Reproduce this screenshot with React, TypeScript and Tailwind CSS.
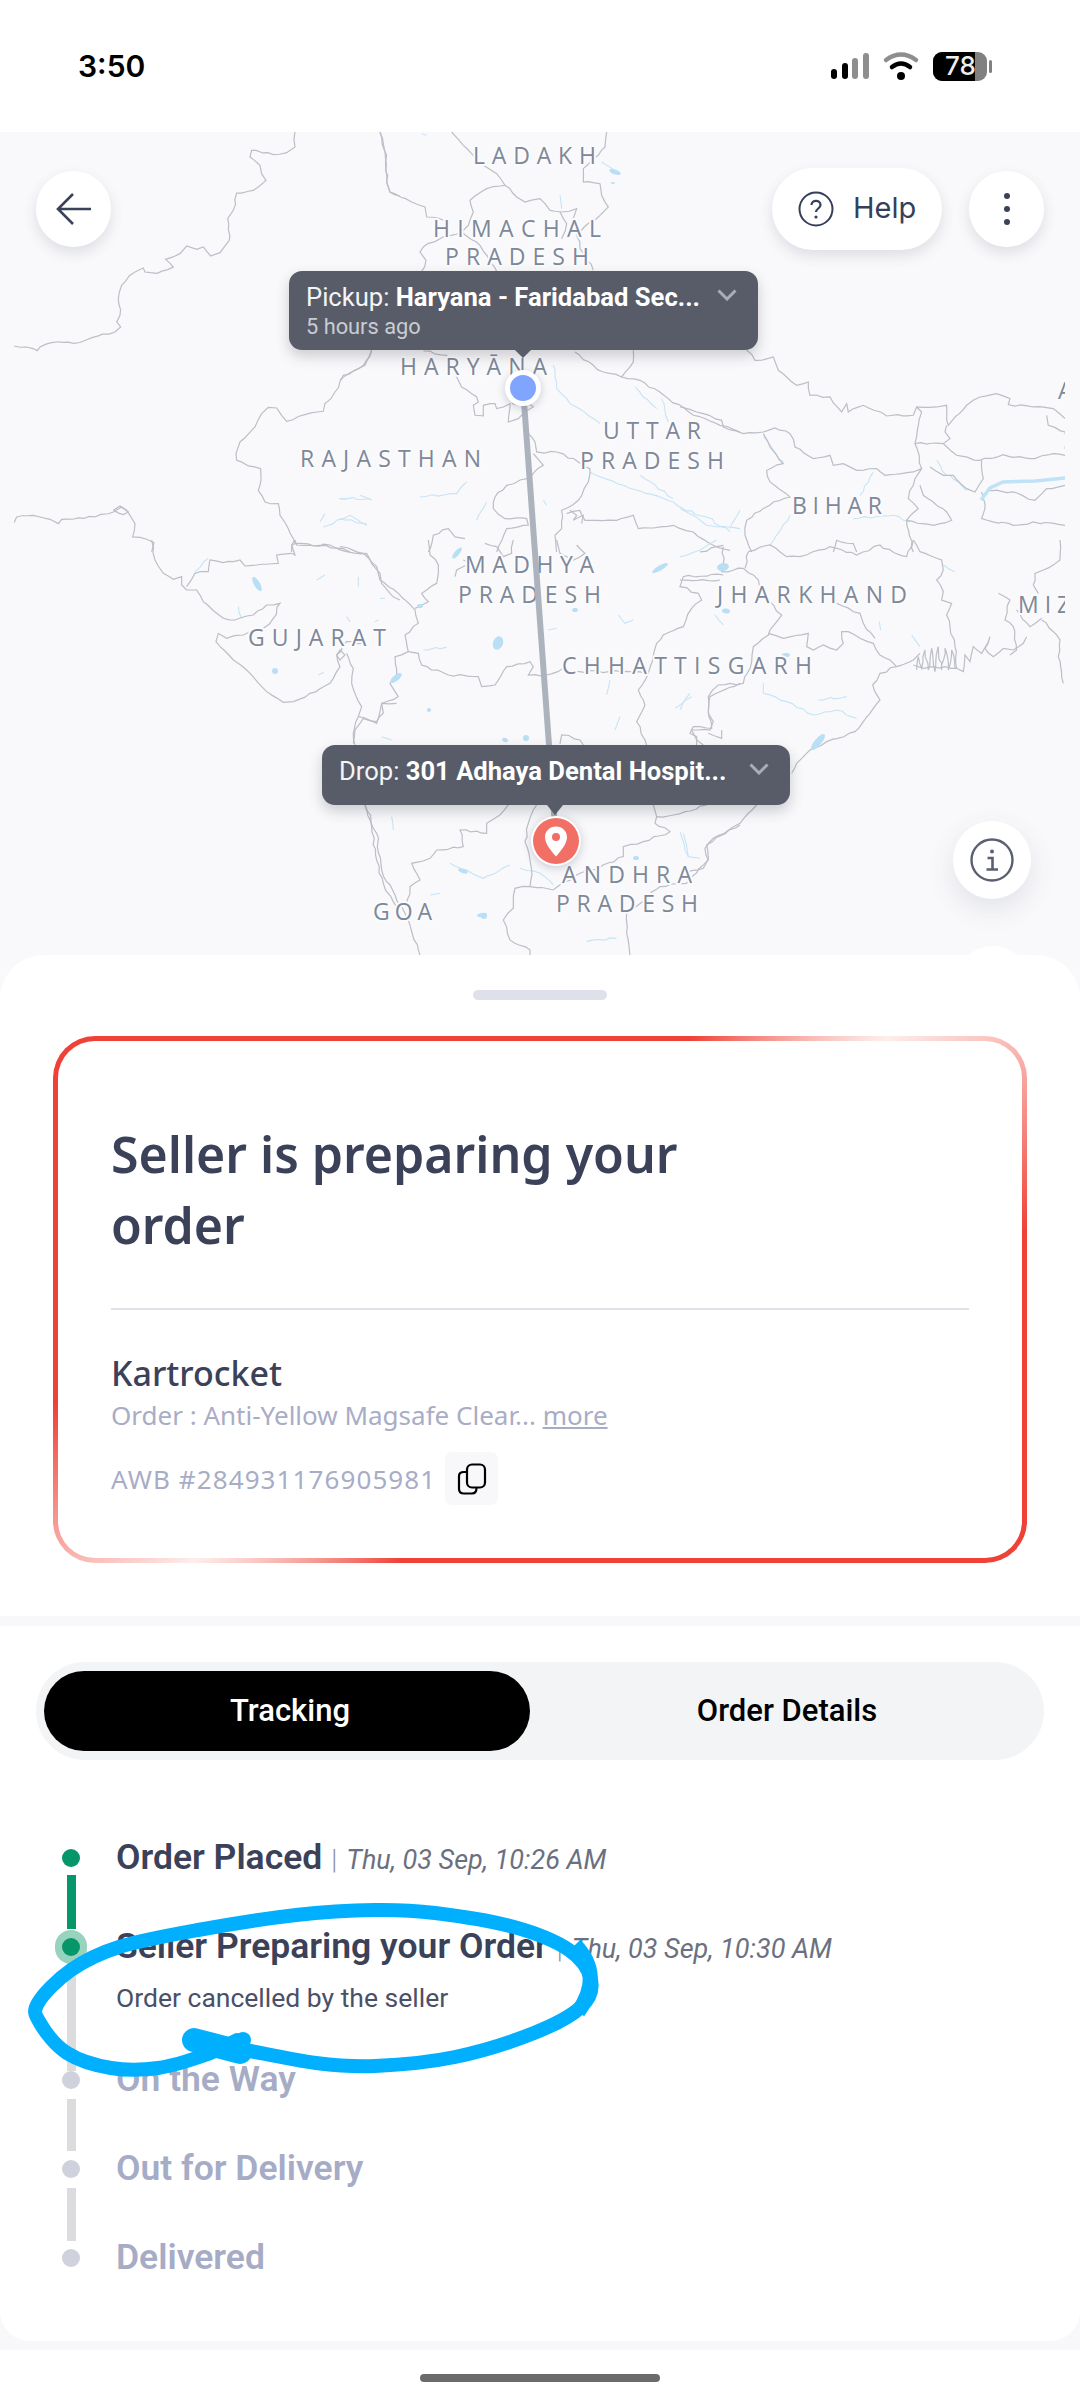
import React from "react";

type Tile = { x: number; y: number; b: string[]; r: string[] };

const tiles: Tile[] = [
  {
    x: 0,
    y: 132,
    b: [
      "885,0 885,45 860,62 820,68 755,55 750,75 780,100 785,125 798,145 760,175 710,183 700,235 683,260 688,325 660,362 632,372 610,345 590,352 560,342 540,365 497,382 520,405 472,424 435,420 430,408 405,420 365,460 355,500 360,550 350,570 362,585 345,600 222,634 155,632 120,645 112,656 80,645 42,642",
      "1115,655 1095,700 1030,730 1005,780 975,815 970,838 915,848 860,868 845,850 830,828 805,826 785,845 765,885 720,930 708,965 710,985 745,1002 782,1010 780,1060 775,1075 795,1110 835,1115 840,1150 865,1190 885,1235 875,1240 875,1260",
      "42,1172 50,1155 100,1150 120,1155 150,1162 175,1175 185,1162 235,1158 285,1155 340,1140 365,1125 390,1150 405,1175 398,1215 440,1222 462,1232 455,1260",
      "340,1135 360,1122 385,1140 370,1148 340,1135",
      "1140,0 1160,70 1160,150 1170,180 1200,192",
      "885,1235 960,1240 1030,1250 1050,1260",
    ],
    r: ["1018,1100 1055,1098", "960,1170 975,1145", "970,1185 1030,1160 1050,1150 1100,1180", "1080,1090 1115,1105"],
  },
  {
    x: 340,
    y: 132,
    b: [
      "120,0 135,60 140,150 150,180 215,210 255,225 260,255 310,265",
      "335,0 370,40 395,65 430,100 470,125 495,160 530,195 555,210 600,200 630,235 665,240 710,230 700,260 720,350 760,415",
      "800,0 795,45 775,70 730,110 730,150 780,155 785,190 805,225 780,250 750,270 720,300",
      "495,160 440,170 390,205 400,240 385,280 365,300 300,320 250,345 240,360 258,385 245,418",
      "365,300 420,340 450,390 470,418",
      "660,240 680,275 665,320",
      "95,655 70,700 0,745",
      "250,657 320,670 350,735 365,765 410,795 415,810 400,820 405,850 430,852 430,820 465,815 470,830 490,825 510,815 505,870 535,860 545,850 580,825 575,820 515,815",
      "705,660 760,700 790,720 845,735 880,690 880,655",
      "845,735 900,745 985,800 1060,850 1140,880 1200,900",
      "565,905 585,930 590,960 650,960 715,990 750,1010 745,1050 715,1105 665,1135 665,1190 645,1210 650,1260",
      "580,965 610,1000 560,1040 500,1060 465,1095 460,1130 495,1160 560,1160 565,1180 500,1190 470,1260",
      "265,1260 280,1210 325,1190 345,1215 375,1220",
      "680,1145 720,1135 735,1165 770,1165 830,1165 880,1150 895,1190 960,1185 1000,1180 1060,1200 1120,1240 1170,1255",
      "690,1135 710,1150 700,1165 730,1150 725,1175",
    ],
    r: [
      "640,700 650,770 690,815 780,875",
      "885,765 950,830",
      "965,800 985,870",
      "750,1020 850,1060 1000,1110 1100,1180 1200,1190",
      "900,1030 1000,1100",
      "0,1100 90,1100",
      "240,1095 350,1085 380,1050",
      "440,1110 410,1165",
      "0,1160 80,1175",
      "610,1105 620,1120",
      "660,190 665,230",
      "785,90 830,120",
      "245,5 260,10",
    ],
  },
  {
    x: 680,
    y: 132,
    b: [
      "200,655 225,685 280,675 295,715 350,760 385,750 390,790 450,795 485,840 500,815 505,840 550,820 620,852 700,850 710,825 770,825 800,820 805,880 860,820 900,795 950,785 990,800 985,818 1060,825 1120,830 1155,860",
      "710,825 725,840 715,880 705,935 790,935 830,970 900,985 970,968 1050,980 1120,965 1155,970",
      "800,880 795,900 810,920 790,935",
      "1100,850 1105,880 1155,900 1155,950",
      "0,825 50,840 125,865 130,885 190,905 250,900 285,888 330,905 345,945 400,980 450,970 460,1000 490,995 530,1015 590,1010 615,1030 700,1020 725,1010 705,935",
      "250,905 270,945 310,995 260,1015 270,1050 330,1095 280,1110 200,1165 195,1210 215,1260",
      "725,1010 700,1060 685,1100 715,1130 680,1165 700,1260",
      "720,1060 730,1090 800,1140 815,1165 760,1180 680,1165",
      "750,1005 790,1030 820,1030 860,1070 885,1080 910,1040 905,985",
      "905,1080 915,1130 905,1160 1000,1180 1060,1170 1155,1180",
      "920,1075 1000,1080 1065,1105 1100,1070 1155,1060",
      "460,1260 470,1225 520,1235 530,1260",
      "130,1240 60,1260",
    ],
    r: ["770,985 800,1030", "250,915 310,990", "580,1020 540,1090", "330,1150 270,1240", "0,1130 80,1155 150,1200", "520,1160 640,1150 690,1170", "180,1135 150,1190", "810,1030 860,1075"],
  },
  {
    x: 0,
    y: 540,
    b: [
      "455,0 465,60 490,100 520,118 545,110 545,135 560,150 590,150 610,185 670,235 705,240 760,225 800,195 840,190 820,235 790,265 730,285 680,295 655,280 648,305 700,360 740,390 800,455 850,487 880,485 930,460 990,430 1020,380 1010,345 1040,305 1090,310",
      "875,40 830,45 835,70 770,75 735,78 720,60 670,68 630,60 625,95 585,100 560,140",
      "885,0 890,15 990,15 1040,35 1100,40 1115,70 1140,100 1145,130 1170,160 1200,180",
      "875,40 885,45 875,15 885,0",
      "1040,340 1060,385 1055,430 1085,500 1075,530 1060,580 1065,615",
      "1095,795 1115,860 1130,960 1150,1030 1180,1085 1200,1120",
      "1075,530 1130,550 1145,490 1190,490",
      "1010,345 1020,330 1035,345 1020,360 1010,345",
    ],
    r: ["585,95 625,55", "715,200 725,235", "950,120 975,105", "1075,110 1075,140", "1140,175 1155,175", "1040,230 1050,245", "955,405 972,397", "1125,245 1135,240", "1145,590 1175,600"],
  },
  {
    x: 340,
    y: 540,
    b: [
      "0,20 70,40 110,80 120,120 175,160 225,210 235,250 195,285 205,335 165,350 170,410 150,430 175,470 125,490 130,520 110,545 70,535 45,570 40,610",
      "265,0 270,45 295,75 290,130 245,160 265,185 225,205",
      "205,335 235,340 245,375 325,405 415,410 425,440 465,435 500,380 570,365 580,380 565,405 620,405 670,385 720,395 895,395 925,400 895,450 915,495 890,545 915,600 920,615",
      "925,400 950,310 970,285 1030,260 1055,205 1085,180 1075,160 1020,140 1030,110 1150,105",
      "660,612 665,585 720,600 730,615",
      "1200,430 1110,470 1105,520 1120,545 1110,570 1055,570 1070,600 1090,615",
      "345,110 350,90 390,70 370,60",
      "520,0 515,40 490,50 470,20 435,10",
      "650,0 660,40 700,60 735,40 710,15",
      "75,795 110,880 125,990 165,1065 200,1130 240,1245",
      "505,795 480,825 440,850 440,880 360,870 370,920 290,930 270,955 215,970 240,1020 210,1040 200,1100",
      "590,795 565,850 555,905 570,960 575,990 570,1040 525,1045 520,1105 490,1140 510,1200 570,1230 570,1245",
      "570,1040 640,1050 720,1000 760,990 850,950 850,920 910,905 990,875 945,850 950,830 1000,825 1100,795",
      "940,795 950,830",
      "1200,855 1120,895 1095,925 1105,960 1040,1030 960,1040 860,1120 860,1180 870,1245",
    ],
    r: [
      "330,970 380,990 430,1015 510,975",
      "540,985 600,1000 640,1035",
      "250,330 320,322",
      "835,225 855,250 880,240",
      "810,420 800,465",
      "1005,505 1055,470",
      "840,530 825,570",
      "1020,875 1045,950",
      "155,830 160,870",
      "740,1205 830,1195",
      "300,1060 270,1065",
      "625,270 650,265",
    ],
  },
  {
    x: 680,
    y: 540,
    b: [
      "130,20 130,70 125,95 190,85 235,120 240,160 305,225 270,270 265,285 220,320 215,365 190,430 115,435 85,470 85,510 95,565 40,560 30,580 50,590 50,615",
      "0,120 120,120",
      "205,35 195,85",
      "265,280 310,295 385,280 380,320 400,330 430,315 470,330 490,310 485,275 505,275 540,295 580,310 600,345 630,360 650,380",
      "125,570 125,595 85,580",
      "205,35 270,15 320,50 360,50 450,20 530,45 600,15 610,25 680,50 700,0",
      "700,0 720,35 785,60 790,90 770,120 790,155 785,180 815,190 800,225 810,260 825,320 830,385",
      "470,190 540,220 550,250 585,295",
      "650,380 700,360 720,340",
      "710,390 715,350 725,385 735,330 745,390 755,325 765,395 775,320 785,390 795,325 805,390 815,330 825,385",
      "700,375 730,385 760,380 830,385 850,395 855,345 870,365 880,320 905,340 930,290 915,325 940,350 970,325 1000,330 1030,310 1040,290",
      "650,380 600,400 578,435 600,480 570,520 525,575 440,605 390,630 350,670 335,700",
      "230,795 180,850 80,915 85,955 70,985 0,1005",
      "955,160 990,180 975,240 1000,260 1010,330 990,345",
      "1060,135 1065,100 1090,90 1140,60 1140,0",
      "1060,135 1075,160",
      "1085,240 1140,300 1135,350 1150,430",
      "1010,210 1050,260 1085,235",
    ],
    r: [
      "250,430 250,460 320,485 400,525 470,510 530,535",
      "415,480 500,470",
      "695,285 720,320",
      "110,0 60,30 0,50",
      "105,225 130,255",
      "598,245 602,270",
      "790,75 825,95",
      "10,880 25,950 60,955",
      "0,510 30,460",
    ],
  },
];

const lakes: [number, number, number, number, number][] = [
  [615, 172, 6, 2.5, 20],
  [257, 584, 3, 8, -30],
  [275, 671, 3, 3, 0],
  [396, 678, 7, 3, -40],
  [420, 606, 3, 2, 0],
  [457, 553, 7, 2.5, -50],
  [498, 643, 5, 7, 20],
  [660, 568, 9, 2.5, -30],
  [723, 567, 6, 4, -10],
  [818, 742, 3.5, 10, 40],
  [463, 871, 5, 2, 20],
  [484, 916, 3, 3, 0],
  [482, 915, 5, 2, -10],
  [726, 611, 4, 2.5, 10],
  [505, 740, 3, 2, 20],
  [526, 738, 3, 3, 0],
  [429, 710, 2, 2, 0],
  [636, 858, 3, 2, 0],
  [575, 610, 3, 2, -10],
  [786, 655, 4, 2, 0],
  [613, 183, 2, 1, 0],
];

const labels: [string, number, number, number][] = [
  ["LADAKH", 473, 164, 129],
  ["HIMACHAL", 433, 237, 174],
  ["PRADESH", 445, 265, 150],
  ["HARYĀNA", 400, 375, 153],
  ["RAJASTHAN", 300, 467, 187],
  ["UTTAR", 603, 439, 104],
  ["PRADESH", 580, 469, 150],
  ["BIHAR", 792, 514, 96],
  ["A", 1058, 399, 0],
  ["MADHYA", 465, 573, 135],
  ["PRADESH", 458, 603, 149],
  ["GUJARAT", 248, 646, 144],
  ["CHHATTISGARH", 562, 674, 256],
  ["JHARKHAND", 717, 603, 196],
  ["MIZ", 1018, 613, 0],
  ["ANDHRA", 562, 883, 136],
  ["PRADESH", 556, 912, 148],
  ["GOA", 373, 920, 65],
];

function jag(s: string, seed: number) {
  const pts = s.split(" ").map((p) => p.split(",").map(Number));
  const out: string[] = [];
  pts.forEach((p, i) => {
    if (i > 0) {
      const q = pts[i - 1];
      const d = Math.hypot(p[0] - q[0], p[1] - q[1]);
      const n = Math.floor(d / 16);
      for (let k = 1; k < n; k++) {
        const t = k / n;
        const a = Math.sin((k + i) * 12.9898 + seed * 78.233) * 43758.5453;
        const b = Math.sin((k + i) * 39.346 + seed * 11.135) * 24634.6345;
        const ox = (a - Math.floor(a) - 0.5) * 7;
        const oy = (b - Math.floor(b) - 0.5) * 7;
        out.push(`${(q[0] + (p[0] - q[0]) * t + ox).toFixed(1)},${(q[1] + (p[1] - q[1]) * t + oy).toFixed(1)}`);
      }
    }
    out.push(`${p[0]},${p[1]}`);
  });
  return out.join(" ");
}

function smooth(p: number[][]) {
  let d = `M${p[0][0]} ${p[0][1]}`;
  for (let i = 0; i < p.length - 1; i++) {
    const p0 = p[Math.max(i - 1, 0)];
    const p1 = p[i];
    const p2 = p[i + 1];
    const p3 = p[Math.min(i + 2, p.length - 1)];
    d += ` C${p1[0] + (p2[0] - p0[0]) / 6} ${p1[1] + (p2[1] - p0[1]) / 6} ${p2[0] - (p3[0] - p1[0]) / 6} ${p2[1] - (p3[1] - p1[1]) / 6} ${p2[0]} ${p2[1]}`;
  }
  return d;
}

function MapDrawing() {
  return (
    <svg className="absolute left-0 top-0" width={1080} height={863} viewBox="0 132 1080 863">
      <defs>
        <clipPath id="mapclip">
          <rect x={14} y={132} width={1051} height={863} />
        </clipPath>
      </defs>
      <g clipPath="url(#mapclip)">
        {tiles.map((t, ti) => (
          <g key={ti} transform={`translate(${t.x} ${t.y}) scale(0.3333)`}>
            {t.r.map((s, i) => (
              <polyline key={i} points={jag(s, ti + i + 50)} fill="none" stroke="#c6e4f6" strokeWidth={1.1} vectorEffect="non-scaling-stroke" />
            ))}
            {t.b.map((s, i) => (
              <polyline key={i} points={jag(s, ti * 7 + i)} fill="none" stroke="#bcbec8" strokeWidth={1.2} vectorEffect="non-scaling-stroke" />
            ))}
          </g>
        ))}
        {lakes.map(([x, y, rx, ry, a], i) => (
          <ellipse key={i} cx={x} cy={y} rx={rx} ry={ry} fill="#b9dff6" transform={`rotate(${a} ${x} ${y})`} />
        ))}
        <path d="M981 500 L990 488 L1003 482 L1035 481 L1065 478" fill="none" stroke="#c0e2f7" strokeWidth={3.5} />
        {labels.map(([t, x, y, w], i) => (
          <text
            key={i}
            x={x}
            y={y}
            textLength={w || undefined}
            lengthAdjust={w ? "spacing" : undefined}
            className="font-['Open_Sans'] text-[23px] [paint-order:stroke] tracking-[6px]"
            fill="#7d8899"
            stroke="#fbfbfd"
            strokeWidth={4}
            strokeLinejoin="round"
          >
            {t}
          </text>
        ))}
      </g>
      <line x1={523} y1={388} x2={556} y2={841} stroke="#adb3bd" strokeWidth={6} />
    </svg>
  );
}

function Chevron({ className }: { className: string }) {
  return (
    <svg className={className} width={20} height={12} viewBox="0 0 20 12" fill="none" stroke="#a9adb7" strokeWidth={3}>
      <path d="M1.5 1.5 L10 10 L18.5 1.5" />
    </svg>
  );
}

function CircleButton({ className, children }: { className: string; children: React.ReactNode }) {
  return <div className={`absolute flex items-center justify-center rounded-full bg-white shadow-[0_6px_14px_rgba(60,65,90,0.14)] ${className}`}>{children}</div>;
}

function Step({
  state,
  title,
  date,
  sub,
  height,
  barHeight,
  barGap,
  barColor,
}: {
  state: "done" | "active" | "todo";
  title: string;
  date?: string;
  sub?: string;
  height: string;
  barHeight?: string;
  barGap?: string;
  barColor?: string;
}) {
  return (
    <div className={`flex ${height}`}>
      <div className="flex w-[38px] flex-col items-center">
        <div className="relative flex h-[18px] w-[18px] items-center justify-center">
          {state === "active" && <div className="absolute h-[34px] w-[32px] rounded-full bg-[#97d4bd]" />}
          <div className={`relative h-[18px] w-[18px] rounded-full ${state === "todo" ? "bg-[#cfd2dd]" : "bg-[#07966a]"}`} />
        </div>
        {barHeight && <div className={`w-[9px] ${barGap} ${barHeight} ${barColor}`} />}
      </div>
      <div className="ml-[26px] -mt-[12px] font-['Roboto']">
        <div className="flex items-baseline whitespace-nowrap">
          <span className={`text-[35.5px] font-semibold leading-[40px] ${state === "todo" ? "text-[#a6acc6]" : "text-[#3b4159]"}`}>{title}</span>
          {date && (
            <>
              <span className="ml-[9px] text-[27px] font-light text-[#8b8f9c]">|</span>
              <span className="ml-[9px] text-[27px] italic text-[#6b7080]">{date}</span>
            </>
          )}
        </div>
        {sub && <div className="mt-[13px] whitespace-nowrap text-[26.5px] leading-[30px] text-[#4a5068]">{sub}</div>}
      </div>
    </div>
  );
}

const strokePts = [
  [194, 2040],
  [245, 2050],
  [316, 2063],
  [375, 2066],
  [455, 2057],
  [534, 2033],
  [581, 2007],
  [591, 1980],
  [569, 1950],
  [514, 1927],
  [435, 1913],
  [375, 1910],
  [296, 1915],
  [198, 1930],
  [119, 1947],
  [71, 1970],
  [38, 2003],
  [40, 2023],
  [67, 2053],
  [111, 2068],
  [158, 2068],
  [205, 2055],
  [237, 2040],
];

export default function App() {
  return (
    <div className="relative h-[2400px] w-[1080px] overflow-hidden bg-white font-['Roboto']">
      {/* status bar */}
      <div className="relative h-[132px] bg-white">
        <div className="absolute left-[78px] top-[47px] font-['Inter'] text-[30px] font-semibold leading-[38px] text-black">3:50</div>
        <svg className="absolute left-[825px] top-[46px]" width={175} height={42} viewBox="825 46 175 42">
          <rect x={831} y={69} width={6} height={10} rx={3} fill="#000" />
          <rect x={842} y={63} width={6} height={16} rx={3} fill="#000" />
          <rect x={852} y={58} width={6} height={21} rx={3} fill="#8e8e8e" />
          <rect x={863} y={53} width={6} height={26} rx={3} fill="#8e8e8e" />
          <path d="M886 60 Q901 49 916 60" fill="none" stroke="#8e8e8e" strokeWidth={4.5} strokeLinecap="round" />
          <path d="M892 67 Q901 60 910 67" fill="none" stroke="#000" strokeWidth={4.5} strokeLinecap="round" />
          <circle cx={901} cy={76} r={4} fill="#000" />
          <rect x={933} y={52} width={54} height={29} rx={9} fill="#808080" />
          <path d="M942 52 H975 V81 H942 A9 9 0 0 1 933 72 V61 A9 9 0 0 1 942 52 Z" fill="#000" />
          <rect x={989} y={60} width={3} height={13} rx={1.5} fill="#808080" />
        </svg>
        <div className="absolute left-[945px] top-[50px] font-['Inter'] text-[26px] font-medium leading-[32px] text-[#eeeeee]">78</div>
      </div>

      {/* map */}
      <div className="relative h-[863px] bg-[#f9f9fb]">
        <MapDrawing />

        <div className="absolute left-[505px] top-[238px] flex h-[36px] w-[36px] items-center justify-center rounded-full bg-white shadow-[0_2px_8px_rgba(60,65,90,0.25)]">
          <div className="h-[26px] w-[26px] rounded-full bg-[#80a5ff]" />
        </div>

        <div className="absolute left-[289px] top-[139px] h-[79px] w-[469px] rounded-[13px] bg-[#585c68] pl-[17px] pt-[10px] shadow-[0_6px_14px_rgba(40,45,60,0.22)]">
          <div className="whitespace-nowrap text-[25.6px] leading-[32px] text-[#f3f4f6]">
            Pickup: <span className="font-bold text-white">Haryana - Faridabad Sec...</span>
          </div>
          <div className="mt-[1px] text-[21.8px] leading-[26px] text-[#c9ccd3]">5 hours ago</div>
          <Chevron className="absolute right-[21px] top-[18px]" />
          <div className="absolute left-[226px] top-[79px] h-0 w-0 border-x-[8px] border-t-[8px] border-x-transparent border-t-[#585c68]" />
        </div>

        <div className="absolute left-[322px] top-[613px] h-[60px] w-[468px] rounded-[13px] bg-[#585c68] pl-[17px] pt-[10px] shadow-[0_6px_14px_rgba(40,45,60,0.22)]">
          <div className="whitespace-nowrap text-[25.6px] leading-[32px] text-[#f3f4f6]">
            Drop: <span className="font-bold text-white">301 Adhaya Dental Hospit...</span>
          </div>
          <Chevron className="absolute right-[21px] top-[18px]" />
          <div className="absolute left-[225px] top-[60px] h-0 w-0 border-x-[8px] border-t-[10px] border-x-transparent border-t-[#585c68]" />
        </div>

        <div className="absolute left-[531px] top-[684px] flex h-[50px] w-[50px] items-center justify-center rounded-full bg-white shadow-[0_2px_10px_rgba(60,65,90,0.25)]">
          <div className="flex h-[46px] w-[46px] items-center justify-center rounded-full bg-[#f26f65]">
            <svg width={24} height={31} viewBox="0 0 24 31">
              <path fillRule="evenodd" fill="#fff" d="M12 0.5 C5.5 0.5 1 5.3 1 11.2 C1 18 7.5 25 12 30.5 C16.5 25 23 18 23 11.2 C23 5.3 18.5 0.5 12 0.5 Z M12 7 A4 4 0 1 1 12 15 A4 4 0 1 1 12 7 Z" />
            </svg>
          </div>
        </div>

        <CircleButton className="left-[36px] top-[39px] h-[76px] w-[75px]">
          <svg width={36} height={32} viewBox="0 0 36 32" fill="none" stroke="#3b4159" strokeWidth={2.6}>
            <path d="M35 16 H2 M17 1 L2 16 L17 31" />
          </svg>
        </CircleButton>

        <div className="absolute left-[772px] top-[36px] flex h-[82px] w-[170px] items-center rounded-full bg-white pl-[26px] shadow-[0_6px_14px_rgba(60,65,90,0.14)]">
          <svg width={36} height={36} viewBox="0 0 36 36" fill="none" stroke="#353f5b" strokeWidth={2}>
            <circle cx={18} cy={18} r={16.5} />
            <path d="M13.5 14 C13.5 8.5 22.5 8.5 22.5 14 C22.5 17.5 18 17.5 18 21" strokeWidth={2.2} />
            <circle cx={18} cy={26} r={1.6} fill="#353f5b" stroke="none" />
          </svg>
          <span className="ml-[19px] -mt-[2px] font-['Inter'] text-[29px] leading-[36px] text-[#353f5b]">Help</span>
        </div>

        <CircleButton className="left-[969px] top-[39px] h-[76px] w-[75px]">
          <div className="flex flex-col gap-[7px]">
            <div className="h-[6px] w-[6px] rounded-full bg-[#3b4159]" />
            <div className="h-[6px] w-[6px] rounded-full bg-[#3b4159]" />
            <div className="h-[6px] w-[6px] rounded-full bg-[#3b4159]" />
          </div>
        </CircleButton>

        <CircleButton className="left-[953px] top-[689px] h-[78px] w-[78px] shadow-[0_10px_28px_rgba(60,65,90,0.12)]">
          <svg width={44} height={44} viewBox="0 0 44 44" fill="none" stroke="#5b6070" strokeWidth={2.4}>
            <circle cx={22} cy={22} r={20.5} />
            <circle cx={22} cy={13.5} r={2} fill="#5b6070" stroke="none" />
            <path d="M17.5 20 H22.5 V31 M16.5 31.5 H28" strokeWidth={2.6} />
          </svg>
        </CircleButton>

        <div className="absolute left-[955px] top-[814px] h-[76px] w-[76px] rounded-full bg-white" />
      </div>

      {/* sheet */}
      <div className="relative -mt-[40px] rounded-t-[44px] bg-white pt-[35px]">
        <div className="mx-auto h-[10px] w-[134px] rounded-full bg-[#dfe1ea]" />
        <div className="ml-[53px] mt-[36px] h-[527px] w-[974px] rounded-[42px] bg-[conic-gradient(#ef4136_0deg,#ef4136_30deg,#fdeeec_53deg,#ef4136_82deg,#ef4136_208deg,#fdeeec_233deg,#ef4136_258deg,#ef4136_360deg)] p-[5px]">
          <div className="h-full w-full rounded-[37px] bg-white px-[53px] pt-[78px]">
            <div className="w-[620px] font-['Noto_Sans'] text-[50px] font-semibold leading-[71px] text-[#3b4159]">Seller is preparing your order</div>
            <div className="mt-[47px] h-[2px] w-[858px] bg-[#e0e2e8]" />
            <div className="mt-[41px] font-['Noto_Sans'] text-[34px] font-medium leading-[44px] text-[#3b4159]">Kartrocket</div>
            <div className="mt-[3px] font-['Noto_Sans'] text-[26px] leading-[34px] text-[#a8adc6]">
              Order : Anti-Yellow Magsafe Clear... <span className="underline">more</span>
            </div>
            <div className="mt-[20px] flex items-center">
              <span className="font-['Noto_Sans'] text-[26px] leading-[34px] tracking-[1.1px] text-[#a8adc6]">AWB #284931176905981</span>
              <div className="ml-[9px] flex h-[53px] w-[53px] items-center justify-center rounded-[7px] bg-[#f8f8fa]">
                <svg width={30} height={32} viewBox="0 0 30 32" fill="none" stroke="#000" strokeWidth={2.2}>
                  <rect x={10} y={1.5} width={18} height={23} rx={5} />
                  <path d="M10 9 H7 Q2 9 2 13 V26 Q2 30.5 7 30.5 H15 Q19.5 30.5 19.5 25" />
                </svg>
              </div>
            </div>
          </div>
        </div>
        <div className="mt-[53px] h-[10px] bg-[#f8f8fa]" />

        {/* tracking */}
        <div className="bg-[#f8f8fa]">
          <div className="h-[715px] rounded-b-[30px] bg-white px-[36px] pt-[36px]">
            <div className="flex h-[98px] w-[1008px] items-center rounded-full bg-[#f3f4f6] pl-[8px]">
              <div className="flex h-[80px] w-[486px] items-center justify-center rounded-[40px] bg-black pl-[6px] text-[31px] font-medium text-white">Tracking</div>
              <div className="flex flex-1 items-center justify-center text-[31px] font-medium text-black">Order Details</div>
            </div>
            <div className="ml-[16px] mt-[89px]">
              <Step state="done" title="Order Placed" date="Thu, 03 Sep, 10:26 AM" height="h-[89px]" barHeight="h-[54px]" barGap="mt-[8px]" barColor="bg-[#07966a]" />
              <Step state="active" title="Seller Preparing your Order" date="Thu, 03 Sep, 10:30 AM" sub="Order cancelled by the seller" height="h-[133px]" barHeight="h-[110px]" barGap="mt-[8px]" barColor="bg-[#dcdcdf]" />
              <Step state="todo" title="On the Way" height="h-[89px]" barHeight="h-[52px]" barGap="mt-[10px]" barColor="bg-[#dcdcdf]" />
              <Step state="todo" title="Out for Delivery" height="h-[89px]" barHeight="h-[53px]" barGap="mt-[10px]" barColor="bg-[#dcdcdf]" />
              <Step state="todo" title="Delivered" height="h-[60px]" />
            </div>
          </div>
          <div className="h-[9px]" />
        </div>
        <div className="h-[50px] bg-white pt-[24px]">
          <div className="mx-auto h-[8px] w-[240px] rounded-full bg-[#6b6b6b]" />
        </div>
      </div>

      {/* pen annotation over the page */}
      <svg className="pointer-events-none absolute left-0 top-0" width={1080} height={2400} viewBox="0 0 1080 2400" fill="none">
        <path d={smooth(strokePts)} stroke="#00b0ff" strokeWidth={14} strokeLinecap="round" strokeLinejoin="round" />
        <path d="M575 1945 Q604 1975 578 2012" stroke="#00b0ff" strokeWidth={15} />
        <path d="M194 2040 L240 2052" stroke="#00b0ff" strokeWidth={24} strokeLinecap="round" />
        <circle cx={243} cy={2040} r={8} fill="#00b0ff" />
      </svg>
    </div>
  );
}
